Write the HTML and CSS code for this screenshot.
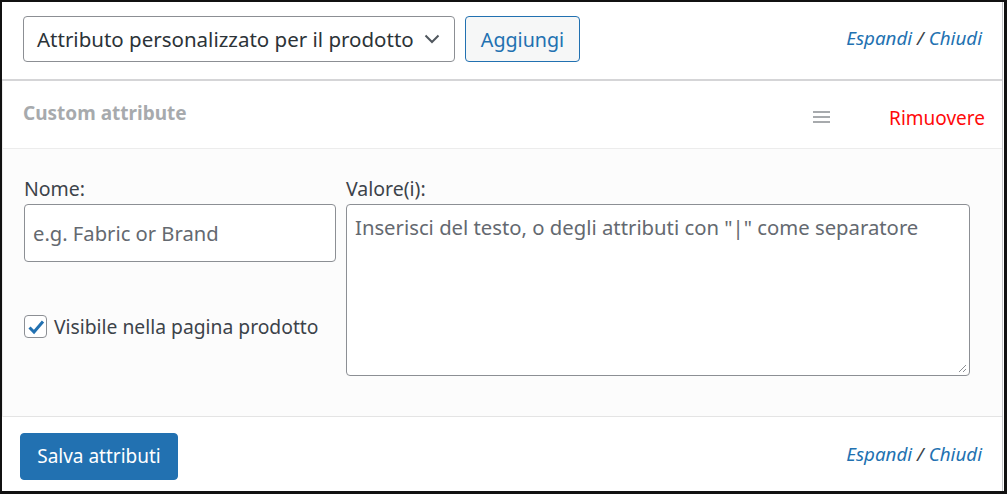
FILE: index.html
```html
<!DOCTYPE html>
<html lang="it">
<head>
<meta charset="utf-8">
<link rel="stylesheet" href="styles.css">
</head>
<body>
<div class="frame">
  <div class="panel">
    <div class="toolbar">
      <div class="select">
        <span>Attributo personalizzato per il prodotto</span>
        <svg class="chev" width="16" height="10" viewBox="0 0 16 10"><path d="M1.5 1.5 L8 8 L14.5 1.5" fill="none" stroke="#50575e" stroke-width="2"/></svg>
      </div>
      <button class="btn-sec">Aggiungi</button>
      <div class="toggle"><a>Espandi</a> / <a>Chiudi</a></div>
    </div>
    <div class="attr">
      <div class="attr-head">
        <strong class="attr-title">Custom attribute</strong>
        <svg class="handle" width="17" height="12" viewBox="0 0 17 12"><rect x="0" y="0" width="17" height="2" fill="#a7aaad"/><rect x="0" y="5" width="17" height="2" fill="#a7aaad"/><rect x="0" y="10" width="17" height="2" fill="#a7aaad"/></svg>
        <a class="remove">Rimuovere</a>
      </div>
      <div class="attr-body">
        <div class="col-left">
          <label class="lbl">Nome:</label>
          <div class="input">e.g. Fabric or Brand</div>
          <label class="check">
            <span class="box"><svg width="18" height="16" viewBox="0 0 18 16"><path d="M2.5 8.5 L7 13 L16 2.5" fill="none" stroke="#2271b1" stroke-width="3"/></svg></span>
            Visibile nella pagina prodotto
          </label>
        </div>
        <div class="col-right">
          <label class="lbl">Valore(i):</label>
          <div class="textarea">Inserisci del testo, o degli attributi con "|" come separatore
            <svg class="grip" width="10" height="10" viewBox="0 0 10 10"><path d="M9 2 L2 9 M9 6 L6 9" stroke="#8c8f94" stroke-width="1"/></svg>
          </div>
        </div>
      </div>
    </div>
    <div class="footer">
      <button class="btn-pri">Salva attributi</button>
      <div class="toggle"><a>Espandi</a> / <a>Chiudi</a></div>
    </div>
  </div>
</div>
</body>
</html>
```

FILE: styles.css
```css
* { box-sizing: border-box; }
html, body { margin: 0; padding: 0; background: #fff; }
body { font-family: "Noto Sans", "Open Sans", sans-serif; color: #3c434a; }

.frame {
  width: 1007px;
  height: 494px;
  border: 2px solid #111;
  border-right-width: 3px;
  border-bottom-width: 3px;
  display: flex;
}
.panel {
  flex: 1;
  display: flex;
  flex-direction: column;
  border-right: 1px solid #c3c4c7;
  margin-right: 1px;
}

.toolbar {
  height: 79px;
  flex: none;
  display: flex;
  align-items: center;
  padding: 0 20px 0 21px;
  border-bottom: 2px solid #d5d5d7;
}
.select {
  width: 432px;
  height: 46px;
  border: 1px solid #8c8f94;
  border-radius: 4px;
  display: flex;
  align-items: center;
  justify-content: space-between;
  padding: 0 14px 0 13px;
  font-size: 20.5px;
  color: #2c3338;
  margin-top: -4px;
}
.chev { flex: none; }
.btn-sec {
  margin-left: 10px;
  height: 46px;
  width: 115px;
  border: 1px solid #2271b1;
  border-radius: 4px;
  background: #f6f7f7;
  color: #2271b1;
  font-family: inherit;
  font-size: 19.7px;
  padding: 0;
  margin-top: -3px;
}
.toggle {
  margin-left: auto;
  font-style: italic;
  font-size: 18.8px;
  color: #3c434a;
}
.toggle a { color: #2271b1; }
.toolbar .toggle { margin-top: -6px; }

.attr { flex: none; border-left: 1px solid #ececec; }
.attr-head {
  height: 68px;
  display: flex;
  align-items: center;
  padding: 0 17px 0 20px;
  border-bottom: 1px solid #ececec;
}
.attr-title {
  font-size: 19px;
  color: #a7aaad;
  font-weight: 700;
  margin-top: -4px;
}
.handle { margin-left: auto; margin-right: 59px; margin-top: 4px; }
.remove { color: #ff0a0a; font-size: 19px; margin-top: 6px; }

.attr-body {
  height: 268px;
  background: #fcfcfc;
  border-bottom: 1px solid #e4e4e4;
  display: flex;
  padding: 27px 0 0 21px;
  gap: 10px;
}
.col-left { width: 312px; display: flex; flex-direction: column; }
.col-right { width: 624px; display: flex; flex-direction: column; }
.lbl { font-size: 19.5px; color: #3c434a; height: 28px; line-height: 26px; }
.input {
  height: 58px;
  border: 1px solid #8c8f94;
  border-radius: 4px;
  background: #fff;
  padding: 0 0 0 8px;
  display: flex;
  align-items: center;
  font-size: 20.2px;
  color: #646970;
}
.check {
  margin-top: 51px;
  display: flex;
  align-items: center;
  gap: 7px;
  font-size: 19.3px;
  color: #3c434a;
}
.box {
  width: 23px;
  height: 23px;
  border: 1px solid #8c8f94;
  border-radius: 4px;
  background: #fff;
  display: flex;
  align-items: center;
  justify-content: center;
}
.textarea {
  position: relative;
  height: 172px;
  width: 624px;
  border: 1px solid #8c8f94;
  border-radius: 4px;
  background: #fff;
  padding: 9px 8px;
  font-size: 20.3px;
  color: #646970;
  line-height: 26px;
}
.grip { position: absolute; right: 2px; bottom: 2px; }

.footer {
  flex: 1;
  display: flex;
  align-items: center;
  padding: 0 20px 0 18px;
}
.btn-pri {
  height: 47px;
  width: 158px;
  border: 1px solid #2271b1;
  border-radius: 4px;
  background: #2271b1;
  color: #fff;
  font-family: inherit;
  font-size: 19px;
  padding: 0;
  margin-top: 4px;
}
.footer .toggle { margin-top: 0; }
```
